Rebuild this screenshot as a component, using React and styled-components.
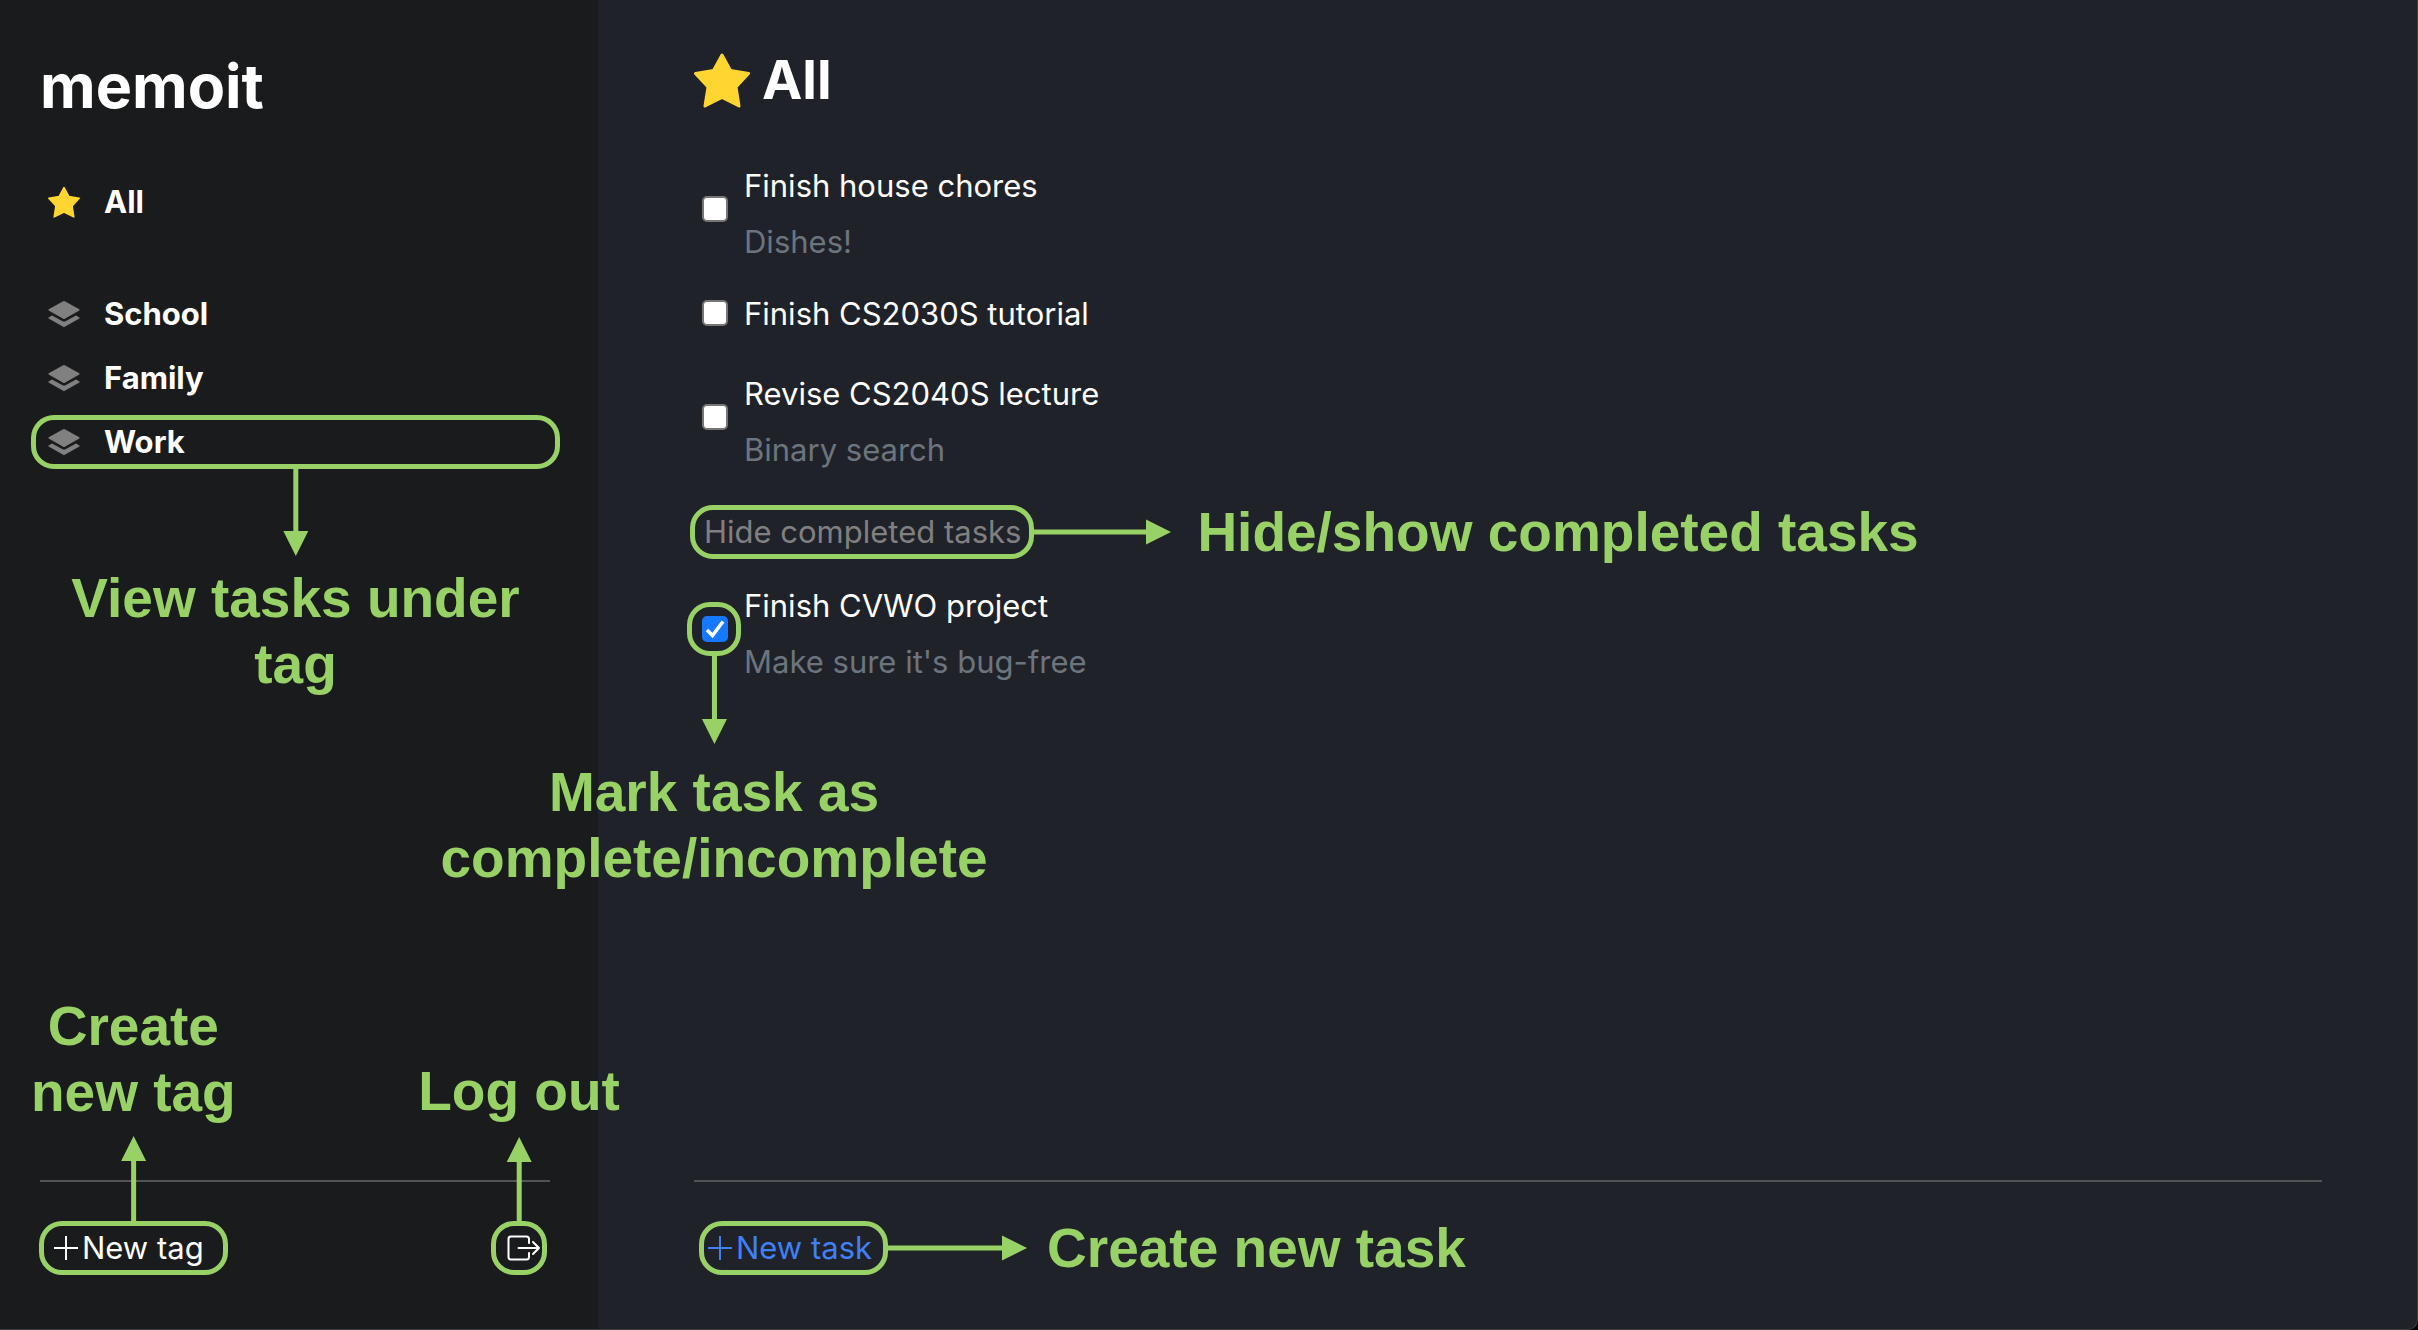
import React, { useState } from "react";
import styled, { createGlobalStyle, css } from "styled-components";

const GREEN = "#98d266";

const GlobalStyle = createGlobalStyle`
  *, *::before, *::after { box-sizing: border-box; }
  body {
    margin: 0;
    background: #000;
    color: #fff;
    font-family: Inter, "Liberation Sans", sans-serif;
    font-size: 31px;
    line-height: 48px;
  }
  h1, h2, p, ul { margin: 0; padding: 0; }
  button, input { font: inherit; }
`;

const Shell = styled.div`
  display: grid;
  grid-template-columns: 598px 1fr;
  min-height: 100vh;
  overflow: hidden;
  background: #20222a;
  border: solid #3c3e43;
  border-width: 0 1px 1px 0;
  border-bottom-right-radius: 10px;
`;

const Sidebar = styled.aside`
  display: flex;
  flex-direction: column;
  padding: 38px 48px 57px 40px;
  background: #1a1b1c;
`;

const Main = styled.main`
  display: flex;
  flex-direction: column;
  padding: 46px 95px 57px 96px;
`;

const Brand = styled.h1`
  font-size: 61px;
  line-height: 96px;
  font-weight: 700;
`;

const TagList = styled.ul`
  display: flex;
  flex-direction: column;
  gap: 16px;
  margin-top: ${(p) => p.$top}px;
  list-style: none;
`;

const TagLink = styled.a`
  position: relative;
  display: flex;
  align-items: center;
  gap: 24px;
  padding-left: 8px;
  color: #fff;
  font-weight: 700;
  text-decoration: none;
  svg { flex: none; }
`;

const Heading = styled.h2`
  display: flex;
  align-items: center;
  gap: 12px;
  margin-bottom: 48px;
  font-size: 54px;
  line-height: 68px;
  font-weight: 700;
`;

const TaskList = styled.ul`
  list-style: none;
`;

const TaskRow = styled.li`
  display: flex;
  align-items: flex-start;
  gap: 16px;
  min-height: 80px;
  padding: 0 0 24px 8px;
`;

const CheckCell = styled.span`
  position: relative;
  display: flex;
  margin-top: ${(p) => (p.$tall ? 34 : 10)}px;
`;

const Check = styled.input`
  appearance: none;
  width: 26px;
  height: 26px;
  margin: 0;
  border: 2px solid #767676;
  border-radius: 5px;
  background: #fff;
  &:checked {
    border-color: #1677ff;
    background: #1677ff;
  }
`;

const Tick = styled.svg`
  position: absolute;
  inset: 0;
  pointer-events: none;
`;

const TaskText = styled.label`
  display: flex;
  flex-direction: column;
  gap: 8px;
`;

const Detail = styled.span`
  color: #6c757d;
`;

const Button = styled.button`
  position: relative;
  display: flex;
  align-items: center;
  align-self: flex-start;
  gap: 4px;
  padding: 0;
  border: 0;
  background: none;
  color: ${(p) => p.$color || "#fff"};
  white-space: nowrap;
`;

const Toggle = styled(Button)`
  margin: 10px 0 26px 10px;
`;

const Footer = styled.footer`
  display: flex;
  justify-content: space-between;
  margin-top: auto;
  padding: 42px 9px 0 14px;
  border-top: 2px solid #515356;
  ${Button} { align-self: center; min-height: 48px; }
`;

/* Green outline drawn around a control, reaching $left / $right pixels past it. */
const Outline = styled.span`
  position: absolute;
  z-index: 1;
  top: 50%;
  left: ${(p) => -p.$left}px;
  right: ${(p) => -p.$right}px;
  height: 54px;
  margin-top: -27px;
  border: 5px solid ${GREEN};
  border-radius: 23px;
  pointer-events: none;
`;

const directions = {
  down: css`
    flex-direction: column;
    top: calc(100% + 5px);
    left: 50%;
    transform: translateX(-50%);
  `,
  up: css`
    flex-direction: column-reverse;
    bottom: calc(100% + 5px);
    left: 50%;
    transform: translateX(-50%);
  `,
  right: css`
    left: calc(100% + 5px);
    top: 50%;
    transform: translateY(-50%);
  `,
};

const Note = styled.span`
  position: absolute;
  display: flex;
  align-items: center;
  gap: ${(p) => p.$gap}px;
  ${(p) => directions[p.$to]}
`;

const NoteText = styled.span`
  color: ${GREEN};
  font: 700 55px/66px "Liberation Sans", Arial, sans-serif;
  text-align: center;
  white-space: pre;
`;

const ArrowSvg = styled.svg`
  flex: none;
`;

function Arrow({ to, length }) {
  const [width, height] = to === "right" ? [length, 26] : [26, length];
  const tip = length - 25;
  const turn = { down: "translate(26 0) rotate(90)", up: `translate(0 ${length}) rotate(-90)` }[to];
  return (
    <ArrowSvg width={width} height={height} aria-hidden="true">
      <g transform={turn} fill={GREEN}>
        <rect x="0" y="10.5" width={tip + 1} height="5" />
        <path d={`M${tip} 0.5L${length} 13L${tip} 25.5Z`} />
      </g>
    </ArrowSvg>
  );
}

function Callout({ to, length, gap, left, right, children }) {
  return (
    <Outline $left={left} $right={right}>
      <Note $to={to} $gap={gap}>
        <Arrow to={to} length={length} />
        <NoteText>{children}</NoteText>
      </Note>
    </Outline>
  );
}

const Star = ({ size }) => (
  <svg width={size} height={size} viewBox="0 0 56 56" aria-hidden="true">
    <path
      d="M28 3L36.500 18.500L54.500 21.500L42 35L45 54L28 45.500L11 54L14 35L1.500 21.500L19.500 18.500Z"
      fill="#ffd631" stroke="#ffd631" strokeWidth="3" strokeLinejoin="round"
    />
  </svg>
);

const Layers = () => (
  <svg width="32" height="32" viewBox="0 0 32 32" fill="#808080" aria-hidden="true">
    <path d="M15.200 3.200Q16 2.800 16.800 3.200L31.300 11.300Q32 12 31.300 12.600L16.800 20.700Q16 21.100 15.200 20.700L0.700 12.600Q0 12 0.700 11.300Z" />
    <path d="M4 17.500L14.500 23.200Q16 24 17.500 23.200L28 17.500L31.400 19.400Q32 20 31.400 20.600L16.800 28.700Q16 29.100 15.200 28.700L0.600 20.600Q0 20 0.600 19.400Z" />
  </svg>
);

const Plus = () => (
  <svg width="24" height="24" viewBox="0 0 24 24" fill="none" stroke="currentColor" strokeWidth="2" aria-hidden="true">
    <path d="M12 0V24M0 12H24" />
  </svg>
);

const LogOut = () => (
  <svg width="34" height="26" viewBox="0 0 34 26" fill="none" stroke="currentColor" strokeWidth="2" strokeLinecap="round" strokeLinejoin="round" aria-hidden="true">
    <path d="M22 8V4Q22 1.500 19.500 1.500H4Q1.500 1.500 1.500 4V22Q1.500 24.500 4 24.500H19.500Q22 24.500 22 22V18" />
    <path d="M11.500 13H32M26 7L32 13L26 19" />
  </svg>
);

function Task({ id, title, detail, done, onToggle, children }) {
  return (
    <TaskRow>
      <CheckCell $tall={Boolean(detail)}>
        <Check type="checkbox" id={id} checked={done} onChange={onToggle} />
        {done && (
          <Tick width="26" height="26" viewBox="0 0 26 26" fill="none" stroke="#fff" strokeWidth="3.500">
            <path d="M5 14L10.500 19.500L21 5.500" />
          </Tick>
        )}
        {children}
      </CheckCell>
      <TaskText htmlFor={id}>
        <span>{title}</span>
        {detail && <Detail>{detail}</Detail>}
      </TaskText>
    </TaskRow>
  );
}

const openTasks = [
  { id: "chores", title: "Finish house chores", detail: "Dishes!" },
  { id: "tutorial", title: "Finish CS2030S tutorial" },
  { id: "lecture", title: "Revise CS2040S lecture", detail: "Binary search" },
];

export default function App() {
  const [done, setDone] = useState({ project: true });
  const flip = (id) => () => setDone((d) => ({ ...d, [id]: !d[id] }));

  return (
    <>
      <GlobalStyle />
      <Shell>
        <Sidebar>
          <Brand>memoit</Brand>
          <nav>
            <TagList $top={44}>
              <li><TagLink href="#all"><Star size={32} />All</TagLink></li>
            </TagList>
            <TagList $top={64}>
              <li><TagLink href="#school"><Layers />School</TagLink></li>
              <li><TagLink href="#family"><Layers />Family</TagLink></li>
              <li>
                <TagLink href="#work">
                  <Layers />Work
                  <Callout to="down" length={87} gap={9} left={9} right={10}>{"View tasks under\ntag"}</Callout>
                </TagLink>
              </li>
            </TagList>
          </nav>
          <Footer>
            <Button>
              <Plus />New tag
              <Callout to="up" length={85} gap={11} left={15} right={24}>{"Create\nnew tag"}</Callout>
            </Button>
            <Button aria-label="Log out">
              <LogOut />
              <Callout to="up" length={84} gap={13} left={16} right={6}>Log out</Callout>
            </Button>
          </Footer>
        </Sidebar>
        <Main>
          <Heading><Star size={56} />All</Heading>
          <TaskList>
            {openTasks.map((t) => (
              <Task key={t.id} {...t} done={Boolean(done[t.id])} onToggle={flip(t.id)} />
            ))}
          </TaskList>
          <Toggle $color="#808080">
            Hide completed tasks
            <Callout to="right" length={137} gap={26} left={14} right={13}>Hide/show completed tasks</Callout>
          </Toggle>
          <TaskList>
            <Task id="project" title="Finish CVWO project" detail="Make sure it's bug-free" done={done.project} onToggle={flip("project")}>
              <Callout to="down" length={88} gap={15} left={15} right={13}>{"Mark task as\ncomplete/incomplete"}</Callout>
            </Task>
          </TaskList>
          <Footer>
            <Button $color="#3f80f7">
              <Plus />New task
              <Callout to="right" length={139} gap={20} left={9} right={16}>Create new task</Callout>
            </Button>
          </Footer>
        </Main>
      </Shell>
    </>
  );
}
